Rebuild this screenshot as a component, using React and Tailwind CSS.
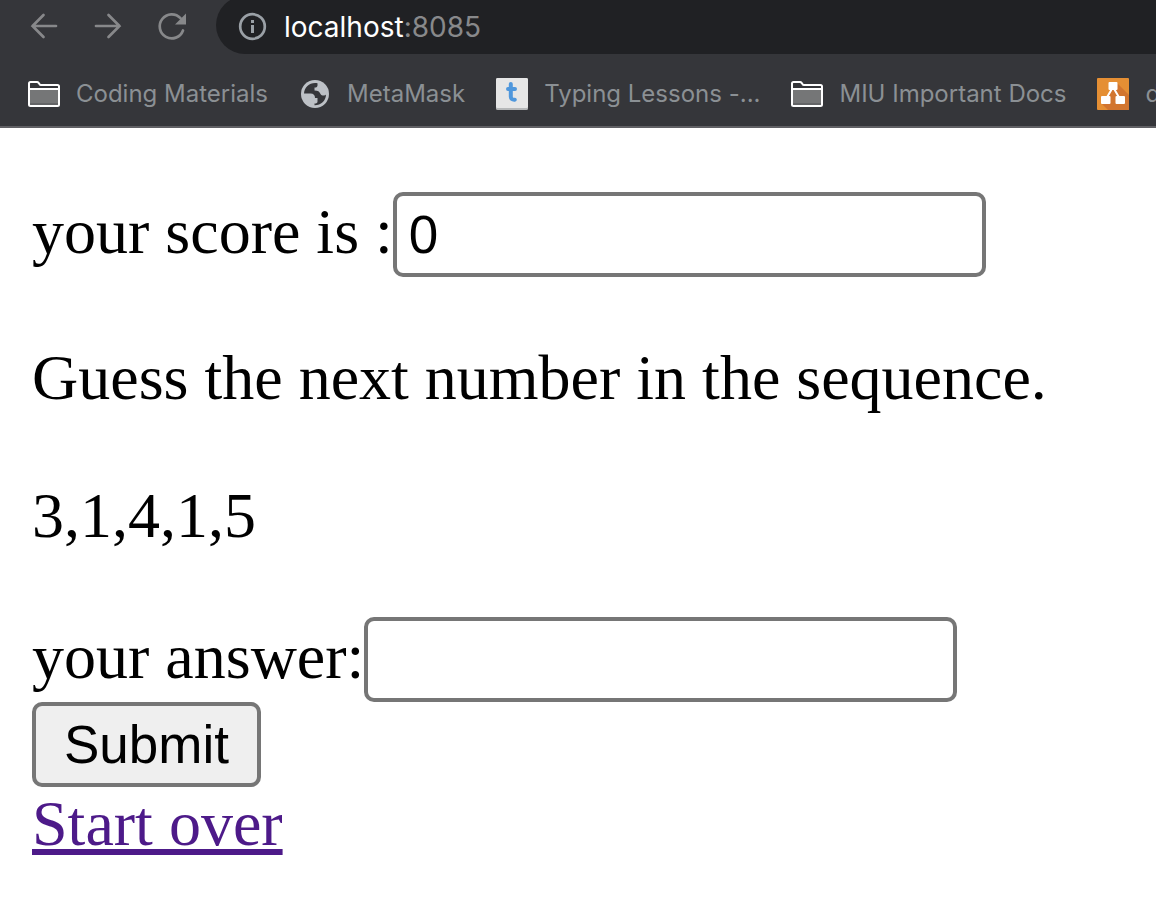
import React from "react";

const chromeIcon = "block h-8 w-8 shrink-0";

function FolderIcon() {
  return (
    <svg viewBox="0 0 32 32" className={chromeIcon} aria-hidden="true">
      <path d="M2 11h28v16H2z" fill="#757677" />
      <path d="M2 25h28v2H2z" fill="#636466" />
      <path
        d="M1 26.5V5.5Q1 4 2.5 4H9q1 0 1.6 .8l1 1.4Q12 7 13 7h16.500Q31 7 31 8.500V26.500Q31 28 29.500 28h-27Q1 28 1 26.500ZM1 11h30"
        fill="none"
        stroke="#fff"
        strokeWidth="2"
      />
    </svg>
  );
}

function GlobeIcon() {
  return (
    <svg viewBox="0 0 32 32" className={chromeIcon} aria-hidden="true">
      <circle cx="16" cy="16" r="14" fill="#bdc1c6" />
      <path
        d="M18.500 5.200C11 4 5.500 8.500 5 15.500H11.500c3 0 4.500 1.500 4.500 4.500h2.500v3.500c0 1.500-1 2-3 2v1.800C21.500 27.500 27 23 27 16.500c-1 1.500-4.500 1.500-5.500-.5-1-2.500-2.500-3.500-6-3.500V9.500c1.500 .3 3-.5 3-2Z"
        fill="#35363a"
      />
    </svg>
  );
}

function TypingIcon() {
  return (
    <svg viewBox="0 0 32 32" className={chromeIcon} aria-hidden="true">
      <rect width="32" height="32" rx="1.500" fill="#b5b7b8" />
      <rect width="32" height="30" rx="1.500" fill="#e6e6e6" />
      <path d="M14.800 6v12.500q0 3.500 4 3.200M12 11h7" fill="none" stroke="#4f97dc" strokeWidth="4" strokeLinecap="round" />
    </svg>
  );
}

function DiagramIcon() {
  return (
    <svg viewBox="0 0 32 32" className={chromeIcon} aria-hidden="true">
      <rect width="32" height="32" rx="1" fill="#e58f34" />
      <path d="M20 5l12 12v14q0 1-1 1H11l-6-6 10-14Z" fill="#d2752f" />
      <path d="M16 9 9 21M16 9l7 12" stroke="#fff" strokeWidth="2" />
      <g fill="#fff">
        <rect x="11.500" y="4" width="9" height="8" rx="1" />
        <rect x="4" y="18" width="9.500" height="8" rx="1" />
        <rect x="18.500" y="18" width="9.500" height="8" rx="1" />
      </g>
    </svg>
  );
}

const bookmarks = [
  { label: "Coding Materials", Icon: FolderIcon },
  { label: "MetaMask", Icon: GlobeIcon },
  { label: "Typing Lessons -...", Icon: TypingIcon },
  { label: "MIU Important Docs", Icon: FolderIcon },
  { label: "draw.io", Icon: DiagramIcon },
];

function NavButton({ label, children }) {
  return (
    <button type="button" aria-label={label} className="h-8 w-8 shrink-0">
      <svg viewBox="0 0 32 32" className={chromeIcon} fill="none" stroke="#87888a" strokeWidth="2.700" strokeLinecap="round">
        {children}
      </svg>
    </button>
  );
}

function BrowserBar() {
  return (
    <header className="overflow-hidden border-b-2 border-[#606064] bg-[#35363a] font-[Inter,sans-serif]">
      <div className="-mt-1 flex h-[58px] pl-7">
        <div className="flex items-center gap-8 pt-0.5">
          <NavButton label="Back">
            <path d="M28 16H4.500M15.500 5l-11 11 11 11" />
          </NavButton>
          <NavButton label="Forward">
            <path d="M4 16h23.500M16.500 5l11 11-11 11" />
          </NavButton>
          <NavButton label="Reload">
            <path d="M27 20.500A12 12 0 1 1 24.500 8.200" />
            <path d="M30 3.500v11H19z" fill="#87888a" stroke="none" />
          </NavButton>
        </div>
        <div className="ml-7 flex flex-1 items-center gap-4 rounded-l-full bg-[#202124] pt-1 pl-5 text-[28px] leading-8 text-white">
          <svg viewBox="0 0 32 32" className={chromeIcon} aria-hidden="true">
            <circle cx="16.500" cy="15.500" r="12.300" fill="none" stroke="#9aa0a6" strokeWidth="2.700" />
            <path d="M15 9h3v3h-3zM15 14h3v8h-3z" fill="#9aa0a6" />
          </svg>
          <span>
            localhost<span className="text-[#88898b]">:8085</span>
          </span>
        </div>
      </div>
      <nav aria-label="Bookmarks" className="flex h-[72px] items-center gap-[31px] pt-2 pl-7">
        {bookmarks.map(({ label, Icon }) => (
          <a key={label} href="#" className="flex shrink-0 items-center gap-4 text-2xl text-[#8b9094]">
            <Icon />
            {label}
          </a>
        ))}
      </nav>
    </header>
  );
}

const inputClass =
  "h-[85px] w-[593px] min-w-0 rounded-[10px] border-4 border-[#767676] bg-white px-3 font-[Liberation_Sans,Arial,sans-serif] text-[53px] text-black";

export default function App() {
  return (
    <div className="min-h-screen bg-white text-black">
      <BrowserBar />
      <main className="px-8 py-16 font-[Liberation_Serif,Times,serif] text-[64px] leading-[74px]">
        <form onSubmit={(event) => event.preventDefault()}>
          <div className="flex items-baseline">
            <label htmlFor="score" className="shrink-0">your score is :</label>
            <input id="score" type="text" defaultValue="0" className={inputClass} />
          </div>
          <p className="my-16">Guess the next number in the sequence.</p>
          <p className="my-16">3,1,4,1,5</p>
          <div className="flex items-baseline">
            <label htmlFor="answer" className="shrink-0">your answer:</label>
            <input id="answer" type="text" className={inputClass} />
          </div>
          <button
            type="submit"
            className="block h-[85px] rounded-[10px] border-4 border-[#767676] bg-[#efefef] px-7 font-[Liberation_Sans,Arial,sans-serif] text-[53px]"
          >
            Submit
          </button>
        </form>
        <a href="#" className="block w-fit text-[#4d1a89] underline decoration-[6px] underline-offset-4">
          Start over
        </a>
      </main>
    </div>
  );
}
